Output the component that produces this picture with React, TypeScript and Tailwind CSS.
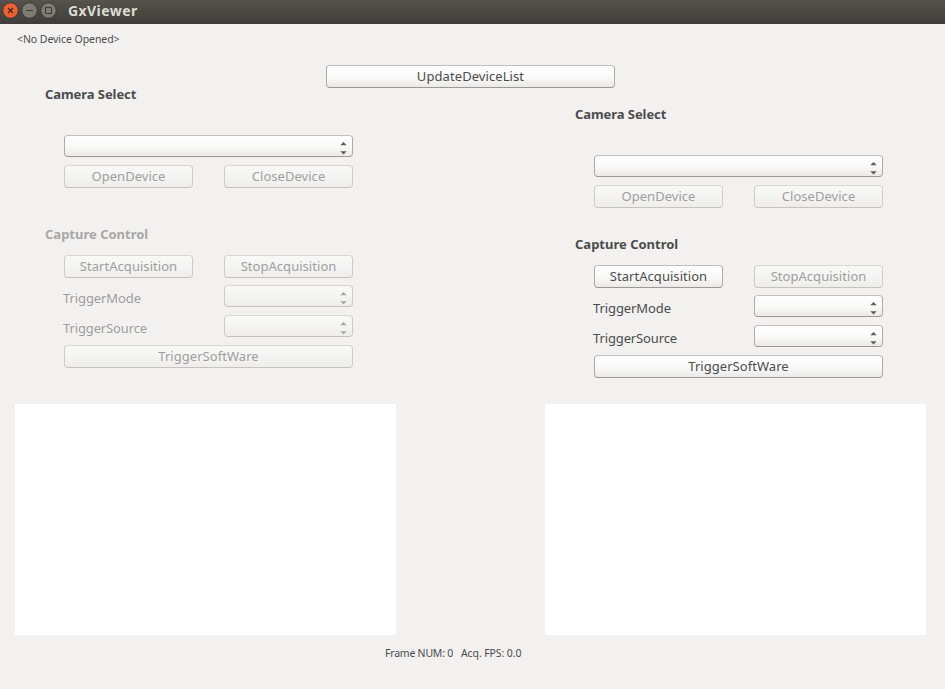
import React from 'react';

type ControlProps = { disabled?: boolean };

const enabledSkin =
  'border-[#c3c0bb] border-b-[#9b9994] border-l-[#aeaba6] border-r-[#aeaba6] bg-linear-to-b from-white via-[#fafaf9] to-[#ebeae8] text-[#4c4c4c]';
const disabledSkin =
  'border-[#dad7d3] border-b-[#c6c3bf] border-l-[#cfccc8] border-r-[#cfccc8] bg-linear-to-b from-[#f8f8f7] via-[#f4f4f3] to-[#eeedeb] text-[#a09e9c]';

function Button({
  label,
  size,
  tracking = 'tracking-[0.04px]',
  disabled = false,
}: ControlProps & { label: string; size: string; tracking?: string }) {
  return (
    <button
      disabled={disabled}
      className={`flex h-[23px] items-center justify-center rounded-[4px] border whitespace-nowrap ${size} ${disabled ? disabledSkin : enabledSkin}`}
    >
      <span className={`leading-[21px] ${tracking}`}>{label}</span>
    </button>
  );
}

function Combo({ size, disabled = false }: ControlProps & { size: string }) {
  return (
    <div
      className={`flex h-[22px] items-start justify-end rounded-[4px] border pt-[6px] pr-[5px] ${size} ${disabled ? disabledSkin : enabledSkin}`}
    >
      <svg
        className={`h-[13px] w-[7px] ${disabled ? 'fill-[#a8a6a4]' : 'fill-[#5c5c5c]'}`}
        viewBox="0 0 7 13"
      >
        <path d="M3.5 0L6.7 3.2H0.3Z" />
        <path d="M3.5 12.4L6.7 9.2H0.3Z" />
      </svg>
    </div>
  );
}

function Title({ label, tracking, disabled = false }: ControlProps & { label: string; tracking: string }) {
  return (
    <h2
      className={`h-3 font-bold leading-3 whitespace-nowrap ${tracking} ${disabled ? 'text-[#a9a7a5]' : 'text-[#4c4c4c]'}`}
    >
      {label}
    </h2>
  );
}

function SettingRow({ label, tracking, disabled = false }: ControlProps & { label: string; tracking: string }) {
  return (
    <div className="flex h-[22px] justify-between">
      <span
        className={`-ml-px pt-[3px] leading-[21px] ${tracking} ${disabled ? 'text-[#a09e9c]' : 'text-[#4c4c4c]'}`}
      >
        {label}
      </span>
      <Combo size="w-[129px]" disabled={disabled} />
    </div>
  );
}

function CameraPanel({ startEnabled, gap, offset }: { startEnabled: boolean; gap: string; offset: string }) {
  const off = !startEnabled;
  return (
    <section className="flex h-[547px] w-[381px] flex-col justify-between">
      <div className={`pl-[30px] ${offset}`}>
        <Title label="Camera Select" tracking="tracking-[-0.07px]" />
        <div className="mt-[35px] ml-[19px] flex w-[289px] flex-col gap-2">
          <Combo size="w-full" />
          <div className="flex justify-between">
            <Button label="OpenDevice" size="w-[129px]" disabled />
            <Button label="CloseDevice" size="w-[129px]" disabled />
          </div>
        </div>
        <div className={gap}>
          <Title label="Capture Control" tracking="tracking-[0px]" disabled={off} />
        </div>
        <div className="mt-[15px] ml-[19px] flex w-[289px] flex-col">
          <div className="mb-[7px] flex justify-between">
            <Button label="StartAcquisition" size="w-[129px]" disabled={off} />
            <Button label="StopAcquisition" size="w-[129px]" disabled />
          </div>
          <div className="mb-2 flex flex-col gap-2">
            <SettingRow label="TriggerMode" tracking="tracking-[-0.1px]" disabled={off} />
            <SettingRow label="TriggerSource" tracking="tracking-[-0.13px]" disabled={off} />
          </div>
          <Button label="TriggerSoftWare" size="w-full" disabled={off} />
        </div>
      </div>
      <div className="h-[231px] bg-white" />
    </section>
  );
}

export default function App() {
  return (
    <main className="flex h-[689px] w-[945px] flex-col overflow-hidden bg-[#f2f1f0] font-['Noto_Sans','Open_Sans',sans-serif] text-[13px] text-[#4c4c4c]">
      <header className="flex h-6 shrink-0 items-center bg-linear-to-b from-[#55534b] to-[#3e3d39] pb-[2px] pl-[2px]">
        <svg className="h-[18px] w-[58px]" viewBox="0 0 58 18" fill="none">
          <circle cx="8.5" cy="8.5" r="7.8" fill="#ee5f31" stroke="#3a3833" />
          <path d="M6 6L11 11M11 6L6 11" stroke="#40281e" strokeWidth="1.2" />
          <circle cx="27.5" cy="8.5" r="7.8" fill="#7d7b74" stroke="#3a3833" />
          <path d="M24 8.5H31" stroke="#3c3b37" />
          <circle cx="46.5" cy="8.5" r="7.8" fill="#7d7b74" stroke="#3a3833" />
          <path d="M43.5 5.5H49.5V11.5H43.5Z" stroke="#3c3b37" />
        </svg>
        <h1 className="ml-2 text-[14px] leading-5 font-bold tracking-[0.43px] text-[#dfdbd2]">GxViewer</h1>
      </header>
      <p className="mt-[5px] h-5 pl-[17px] text-[10.5px] leading-5 tracking-[-0.06px]">&lt;No Device Opened&gt;</p>
      <div className="mt-4 flex h-[23px] shrink-0 pl-[326px]">
        <Button label="UpdateDeviceList" size="w-[289px]" tracking="tracking-[0.08px]" />
      </div>
      <div className="flex shrink-0 gap-[149px] pl-[15px]">
        <CameraPanel startEnabled={false} gap="mt-10" offset="" />
        <CameraPanel startEnabled gap="mt-[30px]" offset="pt-5" />
      </div>
      <footer className="mt-[8px] flex h-5 pl-[385px] text-[10.5px] leading-5 whitespace-nowrap">
        <span className="w-[76px] tracking-[-0.22px]">Frame NUM: 0</span>
        <span className="tracking-[-0.1px]">Acq. FPS: 0.0</span>
      </footer>
    </main>
  );
}
